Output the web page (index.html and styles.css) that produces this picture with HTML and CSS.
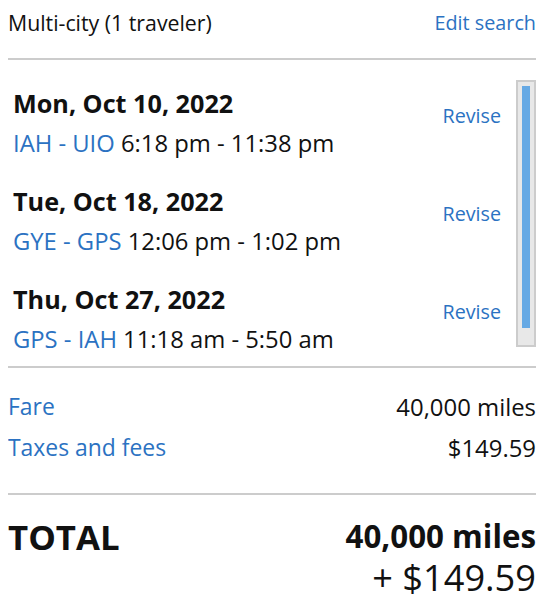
FILE: index.html
```html
<!DOCTYPE html>
<html>
<head>
<meta charset="utf-8">
<link rel="stylesheet" href="styles.css">
</head>
<body>
<div class="summary">
  <div class="header">
    <span class="title">Multi-city (1 traveler)</span>
    <a class="link edit">Edit search</a>
  </div>
  <div class="itinerary">
    <div class="segments">
      <div class="segment">
        <div class="info">
          <div class="date">Mon, Oct 10, 2022</div>
          <div class="route"><span class="link">IAH - UIO</span> 6:18 pm - 11:38 pm</div>
        </div>
        <a class="link revise">Revise</a>
      </div>
      <div class="segment">
        <div class="info">
          <div class="date">Tue, Oct 18, 2022</div>
          <div class="route"><span class="link">GYE - GPS</span> 12:06 pm - 1:02 pm</div>
        </div>
        <a class="link revise">Revise</a>
      </div>
      <div class="segment">
        <div class="info">
          <div class="date">Thu, Oct 27, 2022</div>
          <div class="route"><span class="link">GPS - IAH</span> 11:18 am - 5:50 am</div>
        </div>
        <a class="link revise">Revise</a>
      </div>
    </div>
    <div class="scrollbar"><div class="thumb"></div></div>
  </div>
  <div class="costs">
    <div class="row"><span class="link label">Fare</span><span class="value">40,000 miles</span></div>
    <div class="row"><span class="link label">Taxes and fees</span><span class="value">$149.59</span></div>
  </div>
  <div class="total">
    <div class="total-label">TOTAL</div>
    <div class="total-values">
      <div class="miles">40,000 miles</div>
      <div class="cash">+ $149.59</div>
    </div>
  </div>
</div>
</body>
</html>
```
FILE: styles.css
```css
body {
  margin: 8px;
  font-family: "Open Sans", "Noto Sans", sans-serif;
  color: #111;
  background: #fff;
}
.link { color: #2b72c2; }
.header {
  display: flex;
  justify-content: space-between;
  align-items: center;
  height: 28px;
  padding-bottom: 22px;
  border-bottom: 2px solid #cccccc;
}
.title { font-size: 21.3px; }
.edit { font-size: 19.8px; }
.itinerary {
  display: flex;
  align-items: flex-start;
  padding: 20px 0 7px 5px;
  border-bottom: 2px solid #cccccc;
}
.segments {
  flex: 1;
  padding-top: 3px;
  display: flex;
  flex-direction: column;
  gap: 18px;
  padding-right: 15px;
}
.segment {
  display: flex;
  justify-content: space-between;
  align-items: flex-start;
}
.date {
  font-size: 25.2px;
  font-weight: 700;
  line-height: 40px;
}
.route {
  font-size: 23.8px;
  line-height: 40px;
}
.revise {
  font-size: 19.7px;
  line-height: 26px;
  margin-top: 20px;
}
.scrollbar {
  box-sizing: border-box;
  width: 20px;
  height: 267px;
  border: 2px solid #cccccc;
  background: #e8e8e8;
  padding: 4px 4px 0;
}
.thumb {
  height: 242px;
  background: #66a9e4;
}
.costs {
  padding: 18px 0 25px;
  border-bottom: 2px solid #cccccc;
}
.row {
  display: flex;
  justify-content: space-between;
  align-items: center;
  height: 41px;
}
.label { font-size: 22.9px; }
.value { font-size: 23.9px; }
.total {
  display: flex;
  justify-content: space-between;
  align-items: flex-start;
  padding-top: 21px;
}
.total-label {
  font-size: 34.8px;
  font-weight: 700;
  line-height: 42px;
}
.total-values {
  text-align: right;
  display: flex;
  flex-direction: column;
  align-items: flex-end;
}
.miles {
  font-size: 31.3px;
  font-weight: 700;
  line-height: 40px;
}
.cash {
  font-size: 36.2px;
  line-height: 42px;
}
```
